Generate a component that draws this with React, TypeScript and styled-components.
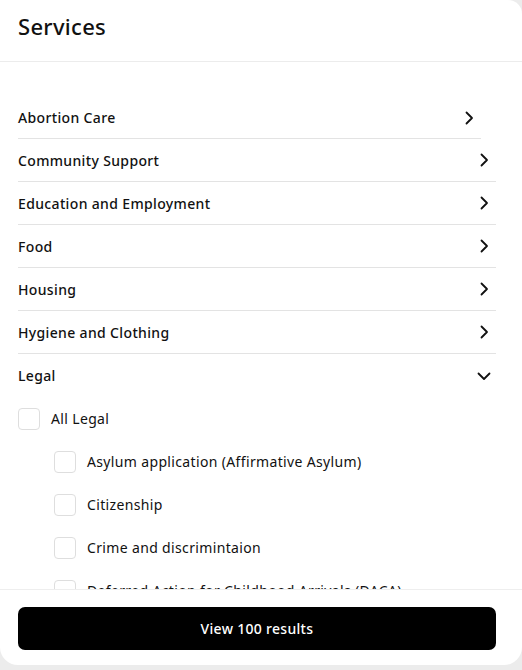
import React from "react";
import styled, { createGlobalStyle } from "styled-components";

const Global = createGlobalStyle`
  html, body { margin: 0; padding: 0; background: #ececec; }
  body { font-family: "Noto Sans", "Open Sans", sans-serif; color: #111; }
  * { box-sizing: border-box; }
`;

const Panel = styled.div`
  width: 522px;
  height: 665px;
  background: #fff;
  border-radius: 0 14px 18px 18px;
  display: flex;
  flex-direction: column;
  overflow: hidden;
`;

const Header = styled.div`
  height: 62px;
  flex: none;
  padding: 13px 18px 0;
  border-bottom: 1px solid #ececec;
`;

const Title = styled.h1`
  margin: 0;
  font-size: 22px;
  font-weight: 500;
  line-height: 26px;
  letter-spacing: 0.3px;
`;

const Scroll = styled.div`
  flex: 1;
  overflow: hidden;
  padding: 34px 26px 0 18px;
`;

const Row = styled.div<{ $narrow?: boolean; $last?: boolean }>`
  height: 43px;
  display: flex;
  align-items: center;
  justify-content: space-between;
  margin-right: ${(p) => (p.$narrow ? "15px" : "0")};
  border-bottom: ${(p) => (p.$last ? "none" : "1px solid #e3e3e3")};
  padding-right: 4px;
  padding-top: ${(p) => (p.$narrow ? "1px" : "0")};
`;

const RowLabel = styled.span`
  font-size: 14px;
  font-weight: 500;
  letter-spacing: 0.35px;
`;

const Option = styled.label<{ $indent?: boolean }>`
  height: 43px;
  display: flex;
  align-items: center;
  gap: 11px;
  padding-left: ${(p) => (p.$indent ? "36px" : "0")};
`;

const Box = styled.span`
  width: 22px;
  height: 22px;
  border: 1px solid #dedede;
  border-radius: 4px;
  flex: none;
`;

const OptionLabel = styled.span`
  font-size: 14px;
  font-weight: 400;
  letter-spacing: 0.35px;
`;

const Footer = styled.div`
  flex: none;
  height: 76px;
  border-top: 1px solid #eeeeee;
  padding: 17px 26px 0 18px;
`;

const Button = styled.button`
  width: 478px;
  height: 43px;
  background: #000;
  color: #fff;
  border: none;
  border-radius: 7px;
  font-family: inherit;
  font-size: 14px;
  font-weight: 500;
  letter-spacing: 0.3px;
`;

const Chevron = ({ down }: { down?: boolean }) =>
  down ? (
    <svg width="16" height="16" viewBox="0 0 16 16" fill="none">
      <path d="M2.5 5.5 L8 11 L13.5 5.5" stroke="#111" strokeWidth="1.8" strokeLinecap="round" strokeLinejoin="round" />
    </svg>
  ) : (
    <svg width="16" height="16" viewBox="0 0 16 16" fill="none">
      <path d="M5.5 2.5 L11 8 L5.5 13.5" stroke="#111" strokeWidth="1.8" strokeLinecap="round" strokeLinejoin="round" />
    </svg>
  );

const categories = [
  "Abortion Care",
  "Community Support",
  "Education and Employment",
  "Food",
  "Housing",
  "Hygiene and Clothing",
];

const legal = [
  "Asylum application (Affirmative Asylum)",
  "Citizenship",
  "Crime and discrimintaion",
  "Deferred Action for Childhood Arrivals (DACA)",
];

export default function App() {
  return (
    <>
      <Global />
      <Panel>
        <Header>
          <Title>Services</Title>
        </Header>
        <Scroll>
          {categories.map((c, i) => (
            <Row key={c} $narrow={i === 0}>
              <RowLabel>{c}</RowLabel>
              <Chevron />
            </Row>
          ))}
          <Row $last>
            <RowLabel>Legal</RowLabel>
            <Chevron down />
          </Row>
          <Option>
            <Box />
            <OptionLabel>All Legal</OptionLabel>
          </Option>
          {legal.map((l) => (
            <Option key={l} $indent>
              <Box />
              <OptionLabel>{l}</OptionLabel>
            </Option>
          ))}
        </Scroll>
        <Footer>
          <Button>View 100 results</Button>
        </Footer>
      </Panel>
    </>
  );
}
